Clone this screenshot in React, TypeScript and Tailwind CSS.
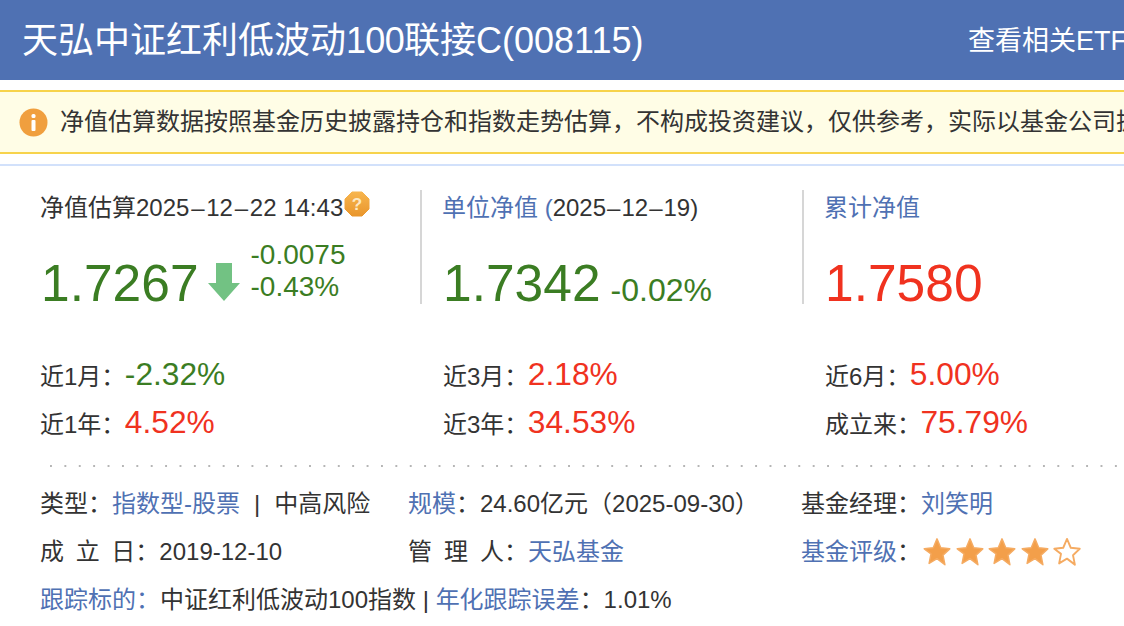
import React from 'react';

const font = { fontFamily: '"Liberation Sans", "Noto Sans CJK SC", sans-serif' };

const Star = ({ filled }: { filled: boolean }) => (
  <svg width="30" height="32" viewBox="0 0 24 24" preserveAspectRatio="none" className="mr-[2.500px]">
    <path
      d="M12 2.200l3 6.600 7.200.8-5.400 4.800 1.500 7.100L12 17l-6.300 3.500 1.500-7.100L1.800 9.600 9 8.800z"
      fill={filled ? '#f39f4a' : '#fff'}
      stroke="#f5ab62"
      strokeWidth={filled ? 1.2 : 1.5}
      strokeLinejoin="round"
    />
  </svg>
);

const Ret = ({ label, value, up, w }: { label: string; value: string; up: boolean; w: string }) => (
  <div className={`flex items-baseline ${w}`}>
    <span className="text-[24px] text-[#333]">{label}：</span>
    <span className={`-ml-[0.500px] text-[31.700px] leading-[48px] ${up ? 'text-[#f0321f]' : 'text-[#3b7d23]'}`}>{value}</span>
  </div>
);

export default function App() {
  return (
    <div className="w-[1124px] h-[626px] overflow-hidden bg-white" style={font}>
      <div className="h-[80px] bg-[#4f71b3] flex items-center justify-between pl-[22px] pt-[2px] text-white whitespace-nowrap">
        <div className="text-[36px] font-normal">
          天弘中证红利低波动<span className="tracking-[-0.700px]">100</span>联接C(008115)
        </div>
        <div className="w-[156px] shrink-0 overflow-hidden text-[27px]">查看相关ETF</div>
      </div>

      <div className="mt-[10px] h-[64px] border-y-2 border-[#f7d34b] bg-[#fffde6] flex items-center pl-[19px] whitespace-nowrap overflow-hidden">
        <svg width="29" height="29" viewBox="0 0 29 29" className="shrink-0">
          <circle cx="14.500" cy="14.500" r="14" fill="#f09f3e" />
          <rect x="12.500" y="6" width="4" height="4" rx="1.500" fill="#fff" />
          <rect x="12.500" y="12" width="4" height="11" rx="1" fill="#fff" />
        </svg>
        <span className="ml-[12px] text-[24px] text-[#333]">
          净值估算数据按照基金历史披露持仓和指数走势估算，不构成投资建议，仅供参考，实际以基金公司披露净值为准。
        </span>
      </div>

      <div className="mt-[10px] h-[2px] bg-[#d2e1fb]" />

      <div className="pl-[40px] pt-[24px] flex">
        <div className="w-[382px] h-[114px] border-r-2 border-[#d6d6d6] shrink-0">
          <div className="flex items-center text-[24px] leading-[36px] text-[#333] whitespace-pre">
            净值估算2025<span className="mx-[1.750px]">–</span>12<span className="mx-[1.750px]">–</span>22 14:43
            <svg width="26" height="26" viewBox="0 0 26 26" className="ml-[1px] -mt-[8px]">
              <defs>
                <linearGradient id="helpFill" x1="0" y1="0" x2="0" y2="1">
                  <stop offset="0" stopColor="#f7b54e" />
                  <stop offset="1" stopColor="#e9962c" />
                </linearGradient>
              </defs>
              <path d="M8 1h10l7 7v10l-7 7H8l-7-7V8z" fill="url(#helpFill)" stroke="url(#helpFill)" strokeWidth="1" strokeLinejoin="round" />
              <text x="13" y="19" textAnchor="middle" fontSize="17" fontWeight="700" fill="#fde9c4">?</text>
            </svg>
          </div>
          <div className="flex items-center mt-[27px]">
            <span className="ml-[1px] text-[51.500px] leading-[60px] text-[#3b7d23]">1.7267</span>
            <svg width="32" height="38" viewBox="0 0 32 38" className="ml-[9px] -mt-[3px]">
              <path d="M8 0h16v20h8L16 38 0 20h8z" fill="#72c283" />
            </svg>
            <div className="ml-[11px] -mt-[24px] text-[28px] leading-[32px] text-[#3b7d23]">
              <div>-0.0075</div>
              <div>-0.43%</div>
            </div>
          </div>
        </div>

        <div className="w-[382px] h-[114px] border-r-2 border-[#d6d6d6] shrink-0 pl-[20px]">
          <div className="text-[24px] leading-[36px] text-[#333] whitespace-pre">
            <span className="text-[#4f71b3]">单位净值 (</span>2025<span className="mx-[1px]">–</span>12<span className="mx-[1px]">–</span>19)
          </div>
          <div className="flex items-baseline mt-[27px]">
            <span className="ml-[1px] text-[51.500px] leading-[60px] text-[#3b7d23]">1.7342</span>
            <span className="ml-[10px] text-[32px] text-[#3b7d23]">-0.02%</span>
          </div>
        </div>

        <div className="pl-[20px]">
          <div className="text-[24px] leading-[36px] text-[#4f71b3]">累计净值</div>
          <div className="ml-[1px] text-[51.500px] leading-[60px] mt-[27px] text-[#f0321f]">1.7580</div>
        </div>
      </div>

      <div className="pl-[40px] mt-[37px] whitespace-nowrap">
        <div className="flex">
          <Ret label="近1月" value="-2.32%" up={false} w="w-[403px]" />
          <Ret label="近3月" value="2.18%" up w="w-[382px]" />
          <Ret label="近6月" value="5.00%" up w="w-[280px]" />
        </div>
        <div className="flex">
          <Ret label="近1年" value="4.52%" up w="w-[403px]" />
          <Ret label="近3年" value="34.53%" up w="w-[382px]" />
          <Ret label="成立来" value="75.79%" up w="w-[280px]" />
        </div>
      </div>

      <div className="ml-[50px] mr-[4px] mt-[19px] h-[2px] bg-[linear-gradient(to_right,#b5b5b5_2px,transparent_2px)] bg-[length:14.400px_2px]" />

      <div className="pl-[40px] pt-[13px] text-[24px] leading-[48px] text-[#333] whitespace-nowrap">
        <div className="flex">
          <div className="w-[368px]">
            类型：<span className="text-[#4f71b3]">指数型-股票</span>
            <span className="mx-[14px]">|</span>中高风险
          </div>
          <div className="w-[393px]">
            <span className="text-[#4f71b3]">规模</span>：24.60亿元（2025-09-30）
          </div>
          <div>
            基金经理：<span className="text-[#4f71b3]">刘笑明</span>
          </div>
        </div>
        <div className="flex">
          <div className="w-[368px] [word-spacing:5px]">成 立 日：2019-12-10</div>
          <div className="w-[393px] [word-spacing:5.300px]">
            管 理 人：<span className="text-[#4f71b3]">天弘基金</span>
          </div>
          <div className="flex items-center">
            <span className="text-[#4f71b3]">基金评级</span>：
            <span className="ml-[1px] flex">
              <Star filled />
              <Star filled />
              <Star filled />
              <Star filled />
              <Star filled={false} />
            </span>
          </div>
        </div>
        <div>
          <span className="text-[#4f71b3]">跟踪标的：</span>
          中证红利低波动100指数 | <span className="text-[#4f71b3]">年化跟踪误差</span>：1.01%
        </div>
      </div>
    </div>
  );
}
